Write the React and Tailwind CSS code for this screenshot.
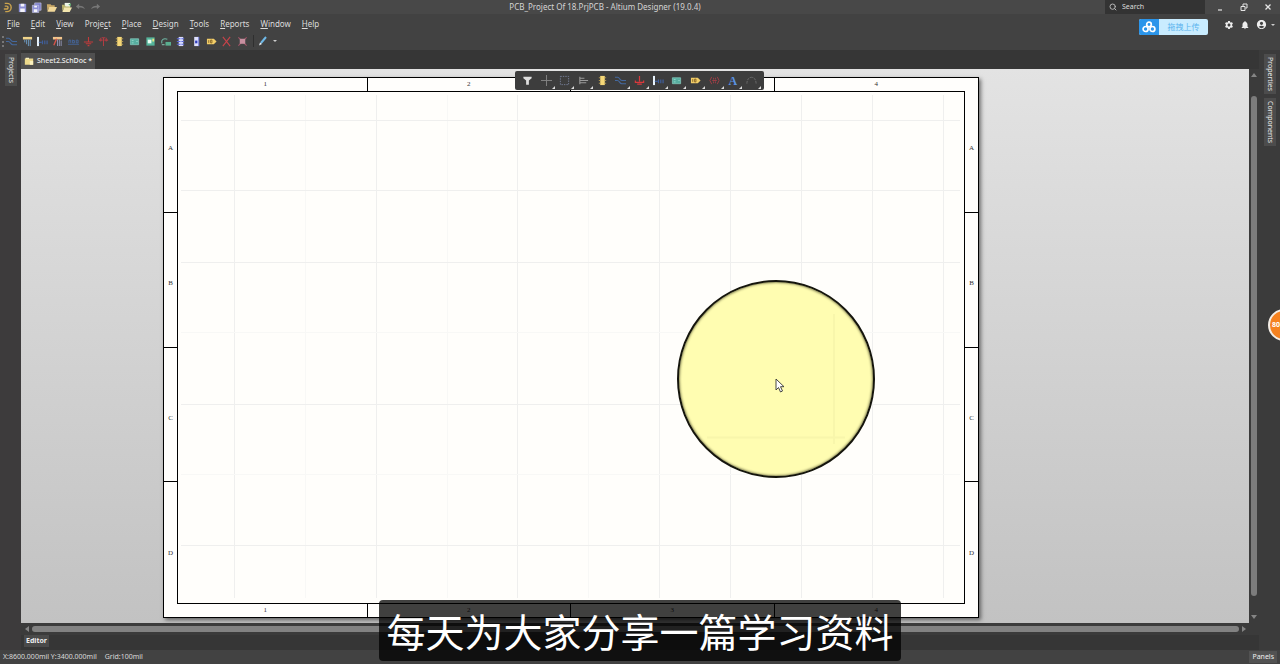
import React from 'react'
import { Search } from 'lucide-react'
import { MdSettings, MdNotifications, MdAccountCircle } from 'react-icons/md'

const MENUS = [
  ['', 'F', 'ile'],
  ['', 'E', 'dit'],
  ['', 'V', 'iew'],
  ['Proje', 'c', 't'],
  ['', 'P', 'lace'],
  ['', 'D', 'esign'],
  ['', 'T', 'ools'],
  ['', 'R', 'eports'],
  ['', 'W', 'indow'],
  ['', 'H', 'elp'],
]

// every glyph is drawn on a 12x12 grid
const GLYPHS = {
  logo: (
    <path d="M3 1.5h2.5a4.5 4.5 0 0 1 0 9H3.5M3 4.5h2a1.5 1.5 0 0 1 0 3.2H2" fill="none" stroke="#c9a24e" strokeWidth="1.6" />
  ),
  save: (
    <>
      <path d="M2 2h8v9H2z" fill="#8c8fd6" />
      <path d="M4 2h4v3H4zM3.5 7h5v4h-5z" fill="#f3f3fa" />
    </>
  ),
  saveAll: (
    <>
      <path d="M4 1h7v8H4z" fill="#7a7dc8" stroke="#d5d5ee" strokeWidth=".6" />
      <path d="M1.500 3.500h7v8h-7z" fill="#8c8fd6" stroke="#d5d5ee" strokeWidth=".6" />
      <path d="M3.500 4h3v2h-3zM3 8h4v3H3z" fill="#f3f3fa" />
    </>
  ),
  open: (
    <>
      <path d="M1 2.500h4l1 1h3.500v2H3.500L1.500 10z" fill="#c8a766" />
      <path d="M3.500 5.500H12L9.500 10.500H1.500z" fill="#f1d798" />
    </>
  ),
  openDoc: (
    <>
      <path d="M4 1h6v5H4z" fill="#eef5e8" />
      <path d="M1 3h3l1 2h5v2H3L1.500 10z" fill="#b9b26c" />
      <path d="M3.500 6H12L9.500 11H1.500z" fill="#f3e6ae" />
      <path d="M8 2.500l3-1-.5 3z" fill="#5fb070" />
    </>
  ),
  undo: <path d="M1 5l3.500-3v2C8 4 10 5 11 8 9.500 6.500 7.500 6 4.500 6v2z" fill="#777" />,
  redo: <path d="M11 5L7.500 2v2C4 4 2 5 1 8c1.500-1.500 3.500-2 6.500-2v2z" fill="#777" />,
  wire: (
    <path d="M0 2.500h3C5 2.500 5 6 7.500 6H12M0 6h2.500C5 6 5 9.500 7.500 9.500H12" fill="none" stroke="#44699f" strokeWidth="1.200" />
  ),
  bus: (
    <>
      <path d="M1 1h10v2.800H1z" fill="#f0d48a" />
      <path d="M3 4v3M5 4v5M7 4v7M9 4v7" stroke="#6f9bc4" strokeWidth="1" />
    </>
  ),
  harness: (
    <>
      <path d="M0 1h2.200v10H0z" fill="#e8f3fc" />
      <path d="M2 7h3M6 5v4M8.500 5v4M11 5v4" stroke="#405f9c" strokeWidth="1.300" />
    </>
  ),
  busEntry: (
    <>
      <path d="M1 1h10v2.800H1z" fill="#f3c58c" />
      <path d="M5 3L2 10" stroke="#d8544a" strokeWidth="1.500" />
      <path d="M6 4v7M8 4v7M10 5v6" stroke="#8d8fae" strokeWidth="1.100" />
    </>
  ),
  netLabel: (
    <path d="M0 9h12M1 7.500V4.500h2v3M5 4v3.500h2V5H5M9 4.500h2v3H9z" fill="none" stroke="#45679c" strokeWidth="1" />
  ),
  gnd: <path d="M6 1v5M1 6.500h10M3 8.500h6M5 10.500h2" stroke="#c23b3b" strokeWidth="1.200" />,
  vcc: <path d="M1 4.500h4M7 4.500h4M3 2v4M9 2v4M4 2h4M6 2v9" stroke="#b03c42" strokeWidth="1.100" fill="none" />,
  part: (
    <>
      <path d="M3.500 1h5v10h-5z" fill="#f5d777" />
      <path d="M2 3h1.500M2 6h1.500M2 9h1.500M8.500 3H10M8.500 6H10M8.500 9H10" stroke="#b59a50" />
    </>
  ),
  sheet: (
    <>
      <path d="M1.500 3h9v6.500h-9z" fill="#57aea0" stroke="#8fd6c8" strokeWidth=".7" />
      <path d="M3 5h2M3 7.500h2M8 6h1.500" stroke="#a7e2d6" strokeWidth=".8" />
    </>
  ),
  sheetEntry: (
    <>
      <path d="M1.500 1.500h9v9h-9z" fill="#54b49a" />
      <path d="M3 4h4v4H3z" fill="#e8fff4" />
      <path d="M8 3h2v3H8z" fill="#e9e27e" />
    </>
  ),
  device: (
    <>
      <path d="M2 8C1 4 4 2 8 3.500" fill="none" stroke="#6fb7a4" strokeWidth="1.200" />
      <path d="M6 6.500h6v4H6z" fill="#5aae8f" />
      <path d="M2 9.500h3" stroke="#8fd0bf" />
    </>
  ),
  connector: (
    <>
      <path d="M4 1h5v10H4z" fill="#d8dcff" />
      <path d="M2 3h4M2 6h4M2 9h4M7 3h3M7 6h3M7 9h3" stroke="#5967d8" strokeWidth="1.100" />
    </>
  ),
  connector2: (
    <>
      <path d="M3.500 1h5v10h-5z" fill="#dfe1ff" />
      <path d="M4.500 5h2.500v3H4.500z" fill="#2f3dbb" />
      <path d="M8.500 1v10" stroke="#6a74dc" />
    </>
  ),
  port: (
    <>
      <path d="M1 3h7.500L11.500 6 8.500 9H1z" fill="#f2cd68" />
      <path d="M3 4.500v3M5 4.500h1.500v3H5z" stroke="#7a5a1e" strokeWidth=".9" fill="none" />
    </>
  ),
  noErc: <path d="M2 1l8 10M10 1L2 11" stroke="#c8434a" strokeWidth="1.200" />,
  generic: (
    <>
      <path d="M1.500 1.500l9 9M10.500 1.500l-9 9" stroke="#a9546a" strokeWidth="1.100" />
      <path d="M3 3h6v5.500H3z" fill="#c78f9f" />
    </>
  ),
  pencil: (
    <>
      <path d="M4 8l5-6" stroke="#6fb9e8" strokeWidth="2" />
      <path d="M2 10.500l1-3 2 1.500z" fill="#e8f3fb" />
    </>
  ),
  filter: <path d="M1.500 2h9v1.500L7.500 6v4.500h-3V6l-3-2.500z" fill="#dedede" />,
  cross: <path d="M6 0v12M0 6h12" stroke="#858585" strokeWidth="1" />,
  marquee: <path d="M1.500 1.500h9v9h-9z" fill="none" stroke="#77809a" strokeDasharray="1.500 1.200" />,
  align: <path d="M2 2v8M2 3.500h5M2 6h9M2 8.500h7" stroke="#9a9a9a" strokeWidth="1.200" />,
  gndRed: <path d="M6 1v6M1.500 6v2h9V6M3.500 10h5" stroke="#d8393c" strokeWidth="1.300" fill="none" />,
  directive: (
    <path d="M3 2L1 6l2 4M9 2l2 4-2 4M5 3v2M7 3v2M5 7v2M7 7v2M3.500 6h5" stroke="#a33e46" strokeWidth="1" fill="none" />
  ),
  arc: <path d="M1 9.500C1 4 4 2.500 6 2.500S11 4 11 9.500" fill="none" stroke="#6c6c6c" strokeDasharray="3 1" />,
  doc: (
    <>
      <path d="M1 3h10v7.500H1z" fill="#ecd98c" />
      <path d="M2 2h4v1.500H2zM7 6h4v4.500H7z" fill="#fbf2c0" />
    </>
  ),
}

const Glyph = ({ name, className = 'size-3' }) => (
  <svg viewBox="0 0 12 12" className={className} aria-hidden="true">
    {GLYPHS[name]}
  </svg>
)

const QUICK = ['logo', 'save', 'saveAll', 'open', 'openDoc', 'undo', 'redo']

const TOOLS = [
  'wire', 'bus', 'harness', 'busEntry', 'netLabel', 'gnd', 'vcc', 'part',
  'sheet', 'sheetEntry', 'device', 'connector', 'connector2', 'port', 'noErc', 'generic',
]

const ACTIVE_BAR = [
  'filter', 'cross', 'marquee', 'align', 'part', 'wire', 'gndRed',
  'harness', 'sheet', 'port', 'directive', 'text', 'arc',
]

const TitleBar = () => (
  <header className="grid h-[14px] grid-cols-[1fr_auto_1fr] items-center bg-[#484848]">
    <div className="grid w-[103px] grid-cols-7 justify-items-center">
      {QUICK.map((name) => (
        <button key={name} type="button" aria-label={name}>
          <Glyph name={name} className="size-[11px]" />
        </button>
      ))}
    </div>
    <h1 className="pr-[70px] text-[8px] leading-[14px] text-[#d4d4d4]">PCB_Project Of 18.PrjPCB - Altium Designer (19.0.4)</h1>
    <div className="flex items-center justify-end">
      <label className="flex h-[14px] w-[100px] items-center gap-[5px] bg-[#333] pl-1 text-[#b5b5b5]">
        <Search className="size-2" strokeWidth={3} />
        <input aria-label="Search" placeholder="Search" className="w-16 bg-transparent text-[7px] leading-[14px] outline-none placeholder:text-[#dcdcdc]" />
      </label>
      <div className="flex w-[75px] items-center justify-end gap-4 pr-2 text-[#e5e5e5]">
        <button type="button" aria-label="Minimize">
          <svg viewBox="0 0 8 8" className="size-2"><path d="M2 7h4" stroke="currentColor" strokeWidth="1.200" /></svg>
        </button>
        <button type="button" aria-label="Restore">
          <svg viewBox="0 0 8 8" className="size-2" fill="none" stroke="currentColor">
            <path d="M1 3.500h4v4H1zM3 3V1h4v4H5.500" />
          </svg>
        </button>
        <button type="button" aria-label="Close">
          <svg viewBox="0 0 8 8" className="size-2"><path d="M1.500 1.500l5 5M6.500 1.500l-5 5" stroke="currentColor" strokeWidth="1.300" /></svg>
        </button>
      </div>
    </div>
  </header>
)

const MenuArea = () => (
  <div className="flex h-9 justify-between bg-[#424242]">
    <div>
      <nav className="flex h-5 items-center gap-[11px] pl-[7px] text-[8px] leading-[12px] text-[#dcdcdc]">
        {MENUS.map(([pre, key, rest]) => (
          <button key={key + rest} type="button">
            {pre}
            <span className="underline">{key}</span>
            {rest}
          </button>
        ))}
      </nav>
      <div className="flex h-[14px] items-center">
        <span className="ml-[2px] h-[11px] border-l-2 border-dotted border-[#777]" />
        <div className="grid w-[246px] grid-cols-16 justify-items-center">
          {TOOLS.map((name) => (
            <button key={name} type="button" aria-label={name}>
              <Glyph name={name} className="size-[11px]" />
            </button>
          ))}
        </div>
        <span className="mx-[3px] h-3 w-px bg-[#2f2f2f]" />
        <button type="button" aria-label="Drawing tools" className="flex items-center gap-1">
          <Glyph name="pencil" />
          <span className="size-0 border-x-2 border-t-2 border-x-transparent border-t-[#ccc]" />
        </button>
      </div>
    </div>
    <div className="flex items-start pt-[5px] pr-[5px]">
      <button type="button" className="mr-4 flex h-4 w-[69px] overflow-hidden rounded-xs bg-[#c9ecff]">
        <span className="flex h-4 w-5 items-center justify-center bg-[#2b95ea]">
          <svg viewBox="0 0 14 12" className="h-3 w-[14px]" fill="none" stroke="#fff" strokeWidth="1.700">
            <circle cx="7" cy="3.500" r="2.300" />
            <circle cx="3.600" cy="8" r="2.500" />
            <circle cx="10.400" cy="8" r="2.500" />
          </svg>
        </span>
        <span className="flex-1 text-[8px] leading-4 text-[#5bb4ee]">拖拽上传</span>
      </button>
      <div className="flex items-center gap-[6px] text-[#eee]">
        <button type="button" aria-label="Settings"><MdSettings className="size-[10px]" /></button>
        <button type="button" aria-label="Notifications"><MdNotifications className="size-[10px]" /></button>
        <button type="button" aria-label="Account" className="flex items-center gap-1">
          <MdAccountCircle className="size-[11px]" />
          <span className="size-0 border-x-2 border-t-2 border-x-transparent border-t-[#ccc]" />
        </button>
      </div>
    </div>
  </div>
)

const DockTab = ({ children }) => (
  <button type="button" className="w-3 bg-[#4c4c4c] pt-[3px] pb-[3px] text-[7px] leading-[12px] text-[#e6e6e6] [writing-mode:vertical-rl]">
    {children}
  </button>
)

const ColumnZones = ({ className }) => (
  <div className={`grid grid-cols-4 divide-x divide-black text-center ${className}`}>
    {[1, 2, 3, 4].map((n) => (
      <span key={n}>{n}</span>
    ))}
  </div>
)

const RowZones = ({ className }) => (
  <div className={`grid grid-rows-4 divide-y divide-black text-center ${className}`}>
    {['A', 'B', 'C', 'D'].map((n) => (
      <span key={n} className="flex items-center justify-center pt-2">{n}</span>
    ))}
  </div>
)

const GRID_X = [56, 127, 198, 269, 339, 410, 481, 552, 623, 694, 765]
const GRID_Y = [28, 98, 170, 240, 312, 382, 453]

const Sheet = () => (
  <div className="grid h-[541px] w-[816px] grid-cols-[13px_1fr_13px] grid-rows-[13px_1fr_13px] border border-black bg-[#fffefc] font-['Liberation_Serif',serif] text-[7px] leading-[13px] text-[#333] shadow-[2px_2px_4px_rgba(0,0,0,0.5)]">
    <ColumnZones className="col-span-3 col-start-1 row-start-1" />
    <ColumnZones className="col-span-3 col-start-1 row-start-3" />
    <RowZones className="col-start-1 row-span-3 row-start-1" />
    <RowZones className="col-start-3 row-span-3 row-start-1" />
    <div className="relative col-start-2 row-start-2 border border-black bg-[#fffefb]">
      <svg className="size-full" aria-hidden="true">
        {GRID_X.map((x, i) => (
          <path key={x} d={`M${x}.5 3V506`} stroke={i % 2 && i < 6 ? '#f8f8f6' : '#efefee'} />
        ))}
        {GRID_Y.map((y) => (
          <path key={y} d={`M3 ${y}.5H782`} stroke={y === 240 || y === 382 ? '#f8f8f6' : '#efefee'} />
        ))}
      </svg>
      <div className="absolute top-[188px] left-[499px] size-[198px] rounded-full border-2 border-[#15150c] bg-[#fffdb1] shadow-[inset_0_0_3px_#2a2a10]">
        <svg viewBox="0 0 194 194" className="size-full" aria-hidden="true">
          <path d="M155 32V162M28 155.500H166" stroke="#f8f6ab" strokeWidth="2" />
          <path d="M97 97v11l2.500-2.500 2 4.500 2-1-2-4.300h3.500z" fill="#fff" stroke="#333" strokeWidth=".9" />
        </svg>
      </div>
    </div>
  </div>
)

const ActiveBar = () => (
  <div className="absolute top-[2px] left-[494px] grid h-[19px] w-[249px] grid-cols-13 rounded-xs bg-[#3d3d3d] px-[3px]">
    {ACTIVE_BAR.map((name, i) => (
      <button key={name} type="button" aria-label={name} className="relative flex items-center justify-center">
        {name === 'text' ? (
          <span className="font-['Liberation_Serif',serif] text-[12px] leading-[12px] font-bold text-[#5b93e0]">A</span>
        ) : (
          <Glyph name={name} className="size-[11px]" />
        )}
        {i !== 0 && i !== 4 && (
          <span className="absolute right-0 bottom-px size-0 border-b-3 border-l-3 border-b-[#ddd] border-l-transparent" />
        )}
      </button>
    ))}
  </div>
)

const Caret = ({ d }) => (
  <svg viewBox="0 0 6 6" className="size-[6px] shrink-0" aria-hidden="true">
    <path d={d} fill="#858585" />
  </svg>
)

const App = () => {
  return (
    <div className="relative flex h-screen flex-col overflow-hidden bg-[#424242] font-['Noto_Sans','Noto_Sans_CJK_SC',sans-serif]">
      <TitleBar />
      <MenuArea />
      <div className="flex min-h-0 flex-1 bg-[#363636]">
        <aside className="flex w-[21px] flex-col items-center bg-[#3d3b3c] pt-1">
          <DockTab>Projects</DockTab>
        </aside>
        <main className="flex min-w-0 flex-1 flex-col">
          <div className="flex h-[19px] items-end">
            <button type="button" className="flex h-4 items-center gap-[3px] bg-[#505050] px-[3px] text-[7px] leading-[16px] font-medium text-[#eee]">
              <Glyph name="doc" className="size-[10px]" />
              Sheet2.SchDoc *
            </button>
          </div>
          <div className="flex min-h-0 flex-1">
            <div className="relative min-w-0 flex-1 overflow-hidden bg-linear-to-b from-[#e3e3e3] to-[#c2c2c2] pt-2 pl-[142px]">
              <Sheet />
              <ActiveBar />
            </div>
            <div className="flex w-[10px] flex-col items-center gap-[18px] bg-[#3b3b3b] py-[3px]">
              <Caret d="M0 5L3 1l3 4z" />
              <div className="w-[6px] flex-1 rounded-full bg-[#7c7c7c]" />
              <Caret d="M0 1l3 4 3-4z" />
            </div>
          </div>
          <div className="flex h-3 items-center gap-[2px] bg-[#3b3b3b] pr-3 pl-[3px]">
            <Caret d="M5 0L1 3l4 3z" />
            <div className="h-[6px] flex-1 rounded-full bg-[#828282]" />
            <Caret d="M1 0l4 3-4 3z" />
          </div>
          <div className="h-[15px] pl-[3px]">
            <button type="button" className="block h-3 bg-[#4a4a4a] px-[2px] text-[7px] leading-[12px] font-bold text-[#eee]">Editor</button>
          </div>
        </main>
        <aside className="flex w-[21px] flex-col items-center gap-1 bg-[#3b3b3b] pt-1">
          <DockTab>Properties</DockTab>
          <DockTab>Components</DockTab>
        </aside>
      </div>
      <footer className="flex h-[14px] items-center justify-between bg-[#424242] px-[3px] text-[7px] leading-[12px] text-[#dadada]">
        <div className="flex gap-2">
          <span>X:8600.000mil Y:3400.000mil</span>
          <span>Grid:100mil</span>
        </div>
        <button type="button" className="bg-[#525252] px-[3px] text-[#eee]">Panels</button>
      </footer>

      <button type="button" className="absolute top-[309px] -right-5 size-8 rounded-full border-2 border-[#f3ede6] bg-[#f58220] pl-[2px] text-left text-[7px] leading-[12px] font-bold text-white">
        80
      </button>
      <p className="absolute bottom-[3px] left-1/2 h-[61px] w-[522px] -translate-x-1/2 rounded-sm bg-black/75 text-center font-['Noto_Sans_CJK_SC',sans-serif] text-[39px] leading-[61px] whitespace-nowrap text-white">
        每天为大家分享一篇学习资料
      </p>
    </div>
  )
}

export default App
